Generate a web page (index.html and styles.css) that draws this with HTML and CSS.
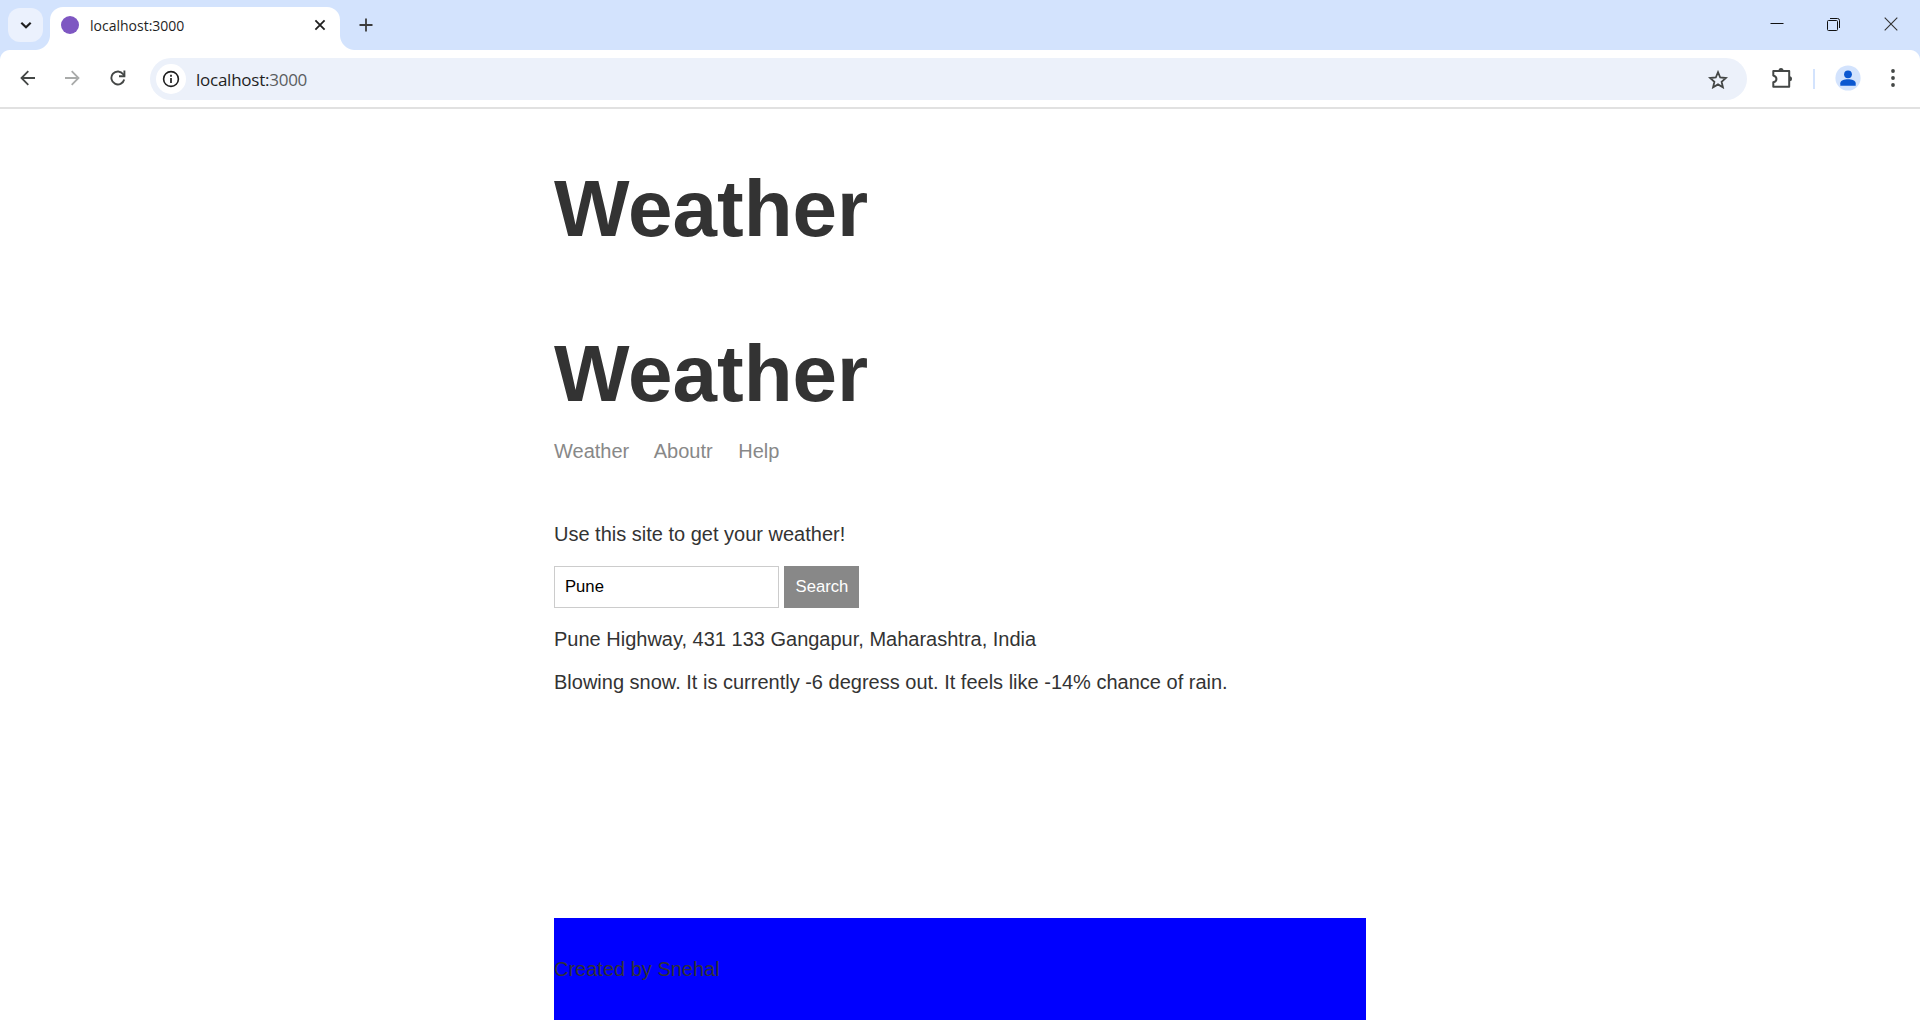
FILE: index.html
```html
<!DOCTYPE html>
<html lang="en">
<head>
<meta charset="utf-8">
<title>localhost:3000</title>
<link rel="stylesheet" href="styles.css">
</head>
<body>
<header class="tabstrip">
  <div class="tab-search"><svg width="35" height="34" viewBox="0 0 35 34"><path d="M13.3 14.8l4.7 4.4 4.7-4.4" fill="none" stroke="#1f1f1f" stroke-width="2.2"/></svg></div>
  <div class="tab">
    <span class="favicon"></span>
    <span class="tab-title">localhost:3000</span>
    <svg class="tab-close" width="12" height="12" viewBox="0 0 12 12"><path d="M1.4 1.4l9.2 9.2M10.6 1.4l-9.2 9.2" stroke="#1f1f1f" stroke-width="1.8"/></svg>
  </div>
  <svg class="new-tab" width="14" height="14" viewBox="0 0 14 14"><path d="M7 .5v13M.5 7h13" stroke="#3c3c3c" stroke-width="1.8"/></svg>
  <div class="window-controls">
    <svg width="14" height="14" viewBox="0 0 14 14"><path d="M.5 6.5h13" stroke="#111" stroke-width="1"/></svg>
    <svg width="14" height="14" viewBox="0 0 14 14" fill="none" stroke="#111"><rect x=".5" y="3.5" width="10" height="10" rx="1"/><path d="M3 1.5h7.5q2 0 2 2V11"/></svg>
    <svg width="14" height="14" viewBox="0 0 14 14"><path d="M.7.7l12.6 12.6M13.3.7L.7 13.3" stroke="#333" stroke-width="1.1"/></svg>
  </div>
</header>
<div class="toolbar">
  <div class="nav-buttons">
    <svg width="16" height="16" viewBox="0 0 16 16" fill="none" stroke="#444746" stroke-width="1.8"><path d="M15 8H2M8.3 1.2L1.5 8l6.8 6.8"/></svg>
    <svg width="16" height="16" viewBox="0 0 16 16" fill="none" stroke="#a9abaa" stroke-width="1.8"><path d="M0 8h13M6.7 1.2L13.5 8l-6.8 6.8"/></svg>
    <svg width="16" height="16" viewBox="0 0 16 16" fill="none" stroke="#444746" stroke-width="1.9"><path d="M14.2 9.5A6.5 6.5 0 1 1 13.2 4.2L14.5 6"/><path d="M14.4.5v5.7H9"/></svg>
  </div>
  <div class="omnibox">
    <span class="site-info"><svg width="18" height="18" viewBox="0 0 18 18"><circle cx="9" cy="9" r="7.4" fill="none" stroke="#1f1f1f" stroke-width="1.6"/><path d="M9 8v5M9 4.8v2" stroke="#1f1f1f" stroke-width="1.7"/></svg></span>
    <span class="url">localhost:<span class="port">3000</span></span>
    <svg class="star" width="20" height="19" viewBox="0 0 20 19"><path d="M10 2.2l2.2 5.3 5.7.5-4.3 3.8 1.3 5.5-4.9-2.9-4.9 2.9 1.3-5.5L2.1 8l5.7-.5z" fill="none" stroke="#444746" stroke-width="1.8"/></svg>
  </div>
  <svg class="extensions" width="22" height="22" viewBox="0 0 22 22"><path d="M2.3 4h15.9v15.7H2.3v-4.4c4.2-1.1 4.2-5.5 0-6.8z" fill="none" stroke="#444746" stroke-width="2" stroke-linejoin="round"/><path d="M7.5 3.5a2.5 2.5 0 0 1 5 0zM18.5 9.3a2.5 2.5 0 0 1 0 5z" fill="#444746"/></svg>
  <span class="divider"></span>
  <svg class="profile" width="26" height="26" viewBox="0 0 26 26"><circle cx="13" cy="13" r="12.6" fill="#d3e3fd"/><circle cx="13" cy="9.3" r="3.9" fill="#0b57d0"/><path d="M5.3 20.7v-2.4c0-5.3 15.4-5.3 15.4 0v2.4z" fill="#0b57d0"/></svg>
  <svg class="menu" width="4" height="18" viewBox="0 0 4 18" fill="#444746"><circle cx="2" cy="2" r="1.9"/><circle cx="2" cy="9" r="1.9"/><circle cx="2" cy="16" r="1.9"/></svg>
</div>
<div class="page">
  <h1>Weather</h1>
  <h1 class="nav-title">Weather</h1>
  <nav><a>Weather</a> <a>Aboutr</a> <a>Help</a></nav>
  <p class="intro">Use this site to get your weather!</p>
  <form><input type="text" value="Pune" aria-label="Location"><button type="button">Search</button></form>
  <p class="location">Pune Highway, 431 133 Gangapur, Maharashtra, India</p>
  <p class="forecast">Blowing snow. It is currently -6 degress out. It feels like -14% chance of rain.</p>
  <footer><p>Created by Snehal</p></footer>
</div>
</body>
</html>
```
FILE: styles.css
```css
* { box-sizing: border-box; }
html, body { height: 100%; overflow: hidden; }
body {
  margin: 0;
  display: flex;
  flex-direction: column;
  background: #fff;
  color: #333;
  font: 20px/23px "Liberation Sans", Arial, sans-serif;
}
svg { display: block; flex: none; }
.tabstrip {
  flex: none;
  height: 60px;
  padding: 7px 14px 0 8px;
  display: flex;
  align-items: flex-start;
  background: #d3e3fd;
}
.tab-search { width: 35px; height: 34px; margin-top: 1px; border-radius: 12px; background: #ebf1fd; }
.tab {
  position: relative;
  display: flex;
  align-items: center;
  width: 290px;
  height: 43px;
  margin-left: 7px;
  padding: 0 14px 7px 11px;
  border-radius: 13px 13px 0 0;
  background: #fff;
}
.tab::before, .tab::after {
  content: "";
  position: absolute;
  bottom: 0;
  width: 15px;
  height: 15px;
}
.tab::before { left: -15px; background: radial-gradient(circle at 0 0, transparent 14.5px, #fff 15.5px); }
.tab::after { right: -15px; background: radial-gradient(circle at 100% 0, transparent 14.5px, #fff 15.5px); }
.favicon { width: 18px; height: 18px; border-radius: 50%; background: #7e57c2; }
.tab-title {
  margin-left: 11px;
  padding-top: 2px;
  color: #1f1f1f;
  font: 14px/20px "Open Sans", sans-serif;
  letter-spacing: 0;
}
.tab-close { margin-left: auto; }
.new-tab { margin: 11px 0 0 19px; }
.window-controls { display: flex; gap: 43px; margin: 10px 8px 0 auto; }
.toolbar {
  flex: none;
  position: relative;
  height: 59px;
  margin-top: -10px;
  padding: 0 25px 2px 20px;
  display: flex;
  align-items: center;
  border-bottom: 2px solid #e1e1e1;
  background: #fff;
}
.toolbar::before, .toolbar::after {
  content: "";
  position: absolute;
  top: 0;
  width: 10px;
  height: 10px;
}
.toolbar::before { left: 0; background: radial-gradient(circle at 100% 100%, transparent 9.5px, #d3e3fd 10.5px); }
.toolbar::after { right: 0; background: radial-gradient(circle at 0 100%, transparent 9.5px, #d3e3fd 10.5px); }
.nav-buttons { display: flex; gap: 29px; }
.omnibox {
  display: flex;
  align-items: center;
  width: 1597px;
  height: 42px;
  margin: 3px 0 0 24px;
  padding: 0 19px 0 6px;
  border-radius: 21px;
  background: #ecf1fa;
}
.site-info { display: grid; place-items: center; width: 30px; height: 30px; border-radius: 50%; background: #fff; }
.url {
  margin-left: 10px;
  padding-top: 1px;
  color: #1f1f1f;
  font: 17px/24px "Open Sans", sans-serif;
  letter-spacing: -.25px;
}
.port { color: #5a5d60; }
.star { margin-left: auto; }
.extensions { margin-left: 24px; }
.divider { width: 2px; height: 20px; margin: 2px 0 0 20px; background: #d3e3fd; }
.profile { margin-left: 20px; }
.menu { margin-left: auto; }
.page {
  flex: 1;
  display: flex;
  flex-direction: column;
  width: 812px;
  margin: 0 auto;
  padding-top: 54px;
}
h1 { flex: none; margin: 0; font-size: 80px; line-height: 92px; }
.nav-title { margin-top: 73px; }
nav { margin-top: 20px; }
nav a { margin-right: 20px; color: #888; }
p { margin: 0; }
.intro { margin-top: 60px; }
form { display: flex; gap: 5px; margin-top: 20px; }
input, button { height: 42px; margin: 0; font: 16.67px/20px "Liberation Sans", Arial, sans-serif; }
input { width: 225px; padding: 0 10px; border: 1px solid #ccc; border-radius: 0; color: #000; }
button { width: 75px; padding: 0 0 0 1px; border: 0; background: #888; color: #fff; }
.location { margin-top: 20px; }
.forecast { margin-top: 20px; }
footer { flex: 1; margin-top: 224px; padding-top: 40px; background: #00f; }
```
